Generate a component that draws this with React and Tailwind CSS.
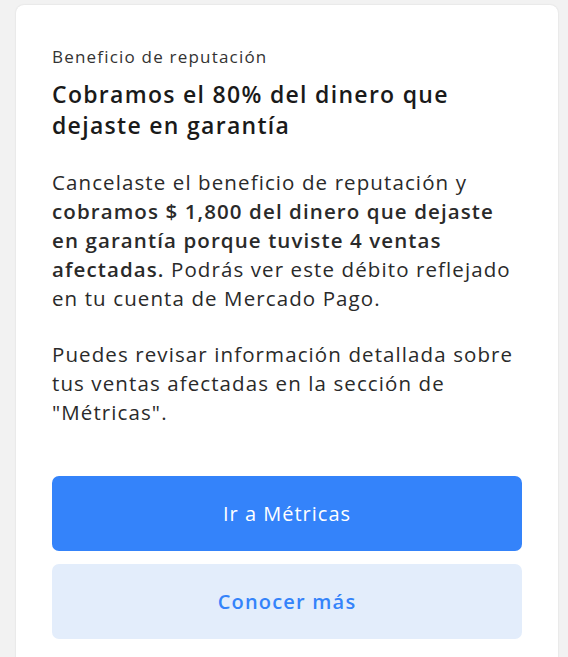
import React from 'react';

const App = () => {
  return (
    <div
      className="h-[657px] bg-[#f2f2f2] pt-[5px] pl-[16px] pr-[10px] overflow-hidden"
      style={{ fontFamily: '"Open Sans", "Liberation Sans", sans-serif' }}
    >
      <div className="bg-white rounded-t-[8px] shadow-[0_0_2px_rgba(0,0,0,0.12)] px-[36px] pt-[40px] pb-[60px] text-[#222]">
        <p className="text-[17px] leading-[24px] tracking-[1.2px] text-[#333]">Beneficio de reputación</p>
        <h1 className="mt-[10px] text-[23px] leading-[31px] tracking-[1.3px] font-semibold text-[#1a1a1a]">
          Cobramos el 80% del dinero que
          <br />
          dejaste en garantía
        </h1>
        <p className="mt-[27px] text-[20.5px] leading-[29px] tracking-[1.1px] text-[#2a2a2a] whitespace-nowrap">
          Cancelaste el beneficio de reputación y
          <br />
          <span className="font-semibold">
            cobramos $ 1,800 del dinero que dejaste
            <br />
            en garantía porque tuviste 4 ventas
            <br />
            afectadas.
          </span>{' '}
          Podrás ver este débito reflejado
          <br />
          en tu cuenta de Mercado Pago.
        </p>
        <p className="mt-[27px] text-[20.5px] leading-[29px] tracking-[1.1px] text-[#2a2a2a] whitespace-nowrap">
          Puedes revisar información detallada sobre
          <br />
          tus ventas afectadas en la sección de
          <br />
          "Métricas".
        </p>
        <div className="mt-[49px] flex flex-col gap-[13px]">
          <button className="h-[75px] w-full rounded-[7px] bg-[#3483fa] text-white text-[20px] tracking-[1px]">
            Ir a Métricas
          </button>
          <button className="h-[75px] w-full rounded-[7px] bg-[#e3edfb] text-[#3483fa] text-[20px] tracking-[1.2px] font-semibold">
            Conocer más
          </button>
        </div>
      </div>
    </div>
  );
};

export default App;
